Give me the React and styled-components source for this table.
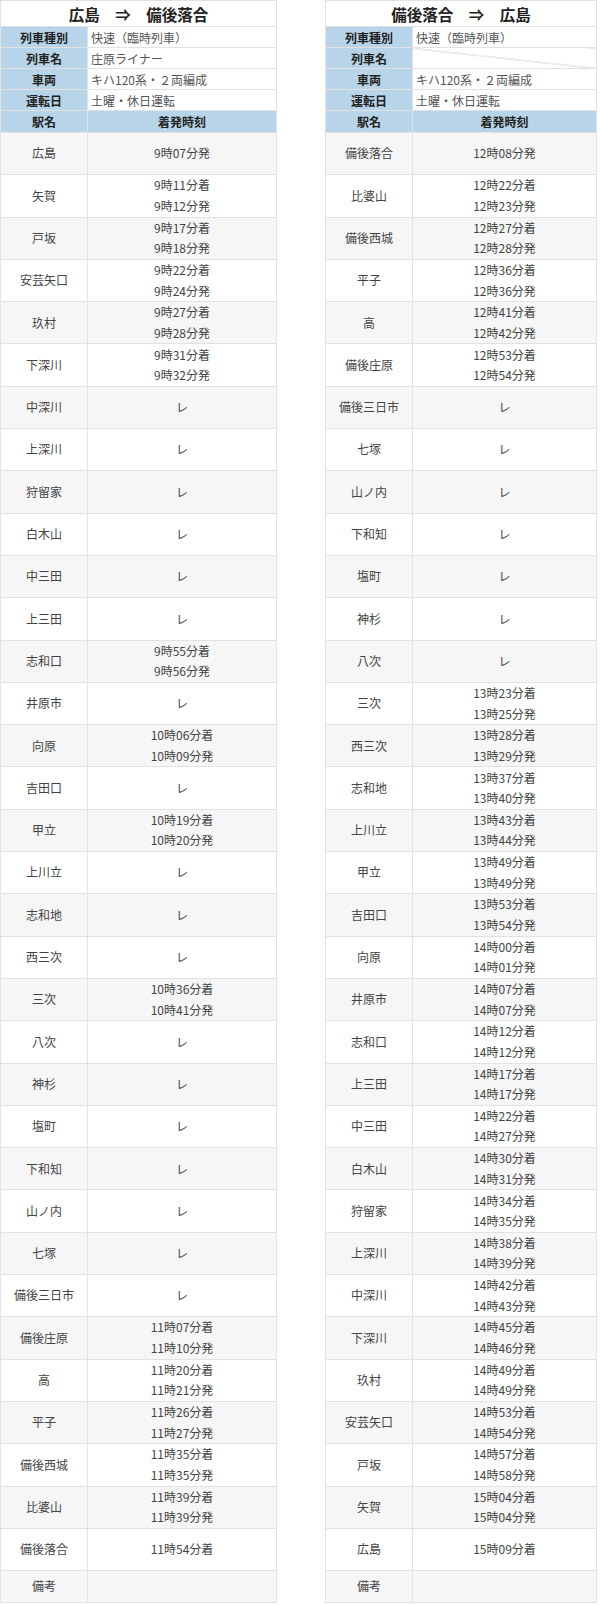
import React from 'react';
import styled, { createGlobalStyle } from 'styled-components';

const GlobalStyle = createGlobalStyle`
  body {
    margin: 0;
    background: #fff;
    font-family: "Noto Sans CJK JP", "Noto Sans", sans-serif;
    color: #444;
  }
`;

const Page = styled.div`
  display: flex;
  align-items: flex-start;
  justify-content: space-between;
  width: 597px;
`;

const Table = styled.table`
  width: ${(p) => p.width}px;
  border-collapse: collapse;
  table-layout: fixed;
  font-size: 12px;
`;

const LabelCol = styled.col`
  width: 87px;
`;

const TitleCell = styled.td`
  height: 25px;
  padding: 0;
  border: 1px solid #e2e2e2;
  text-align: center;
  font-size: 15.5px;
  font-weight: bold;
  color: #222;
  white-space: pre;
`;

const Label = styled.td`
  height: 20px;
  padding: 0;
  border: 1px solid #e2e2e2;
  background: #b7d4e8;
  text-align: center;
  font-weight: bold;
  color: #222;
`;

const Value = styled.td`
  padding: 0 0 0 3px;
  border: 1px solid #e2e2e2;
  color: #555;
  white-space: nowrap;
  background: ${(p) =>
    p.slashed
      ? 'linear-gradient(to top right, #fff calc(50% - 0.8px), #cfcfcf 50%, #fff calc(50% + 0.8px))'
      : '#fff'};
`;

const HeadCell = styled.td`
  height: 21px;
  padding: 0;
  border: 1px solid #e2e2e2;
  background: #b7d4e8;
  text-align: center;
  font-weight: bold;
  color: #222;
`;

const Row = styled.tr`
  height: ${(p) => (p.remarks ? 32 : 42.3)}px;
  background: ${(p) => (p.odd ? '#f6f6f6' : '#fff')};
`;

const Cell = styled.td`
  padding: 0;
  border: 1px solid #e2e2e2;
  text-align: center;
  line-height: 20.5px;
  color: #444;
`;

const leftInfo = {
  title: '広島　⇒　備後落合',
  type: '快速（臨時列車）',
  name: '庄原ライナー',
  car: 'キハ120系・２両編成',
  day: '土曜・休日運転',
};

const rightInfo = {
  title: '備後落合　⇒　広島',
  type: '快速（臨時列車）',
  name: null,
  car: 'キハ120系・２両編成',
  day: '土曜・休日運転',
};

const P = 'レ';

const leftStops = [
  ['広島', ['9時07分発']],
  ['矢賀', ['9時11分着', '9時12分発']],
  ['戸坂', ['9時17分着', '9時18分発']],
  ['安芸矢口', ['9時22分着', '9時24分発']],
  ['玖村', ['9時27分着', '9時28分発']],
  ['下深川', ['9時31分着', '9時32分発']],
  ['中深川', [P]],
  ['上深川', [P]],
  ['狩留家', [P]],
  ['白木山', [P]],
  ['中三田', [P]],
  ['上三田', [P]],
  ['志和口', ['9時55分着', '9時56分発']],
  ['井原市', [P]],
  ['向原', ['10時06分着', '10時09分発']],
  ['吉田口', [P]],
  ['甲立', ['10時19分着', '10時20分発']],
  ['上川立', [P]],
  ['志和地', [P]],
  ['西三次', [P]],
  ['三次', ['10時36分着', '10時41分発']],
  ['八次', [P]],
  ['神杉', [P]],
  ['塩町', [P]],
  ['下和知', [P]],
  ['山ノ内', [P]],
  ['七塚', [P]],
  ['備後三日市', [P]],
  ['備後庄原', ['11時07分着', '11時10分発']],
  ['高', ['11時20分着', '11時21分発']],
  ['平子', ['11時26分着', '11時27分発']],
  ['備後西城', ['11時35分着', '11時35分発']],
  ['比婆山', ['11時39分着', '11時39分発']],
  ['備後落合', ['11時54分着']],
];

const rightStops = [
  ['備後落合', ['12時08分発']],
  ['比婆山', ['12時22分着', '12時23分発']],
  ['備後西城', ['12時27分着', '12時28分発']],
  ['平子', ['12時36分着', '12時36分発']],
  ['高', ['12時41分着', '12時42分発']],
  ['備後庄原', ['12時53分着', '12時54分発']],
  ['備後三日市', [P]],
  ['七塚', [P]],
  ['山ノ内', [P]],
  ['下和知', [P]],
  ['塩町', [P]],
  ['神杉', [P]],
  ['八次', [P]],
  ['三次', ['13時23分着', '13時25分発']],
  ['西三次', ['13時28分着', '13時29分発']],
  ['志和地', ['13時37分着', '13時40分発']],
  ['上川立', ['13時43分着', '13時44分発']],
  ['甲立', ['13時49分着', '13時49分発']],
  ['吉田口', ['13時53分着', '13時54分発']],
  ['向原', ['14時00分着', '14時01分発']],
  ['井原市', ['14時07分着', '14時07分発']],
  ['志和口', ['14時12分着', '14時12分発']],
  ['上三田', ['14時17分着', '14時17分発']],
  ['中三田', ['14時22分着', '14時27分発']],
  ['白木山', ['14時30分着', '14時31分発']],
  ['狩留家', ['14時34分着', '14時35分発']],
  ['上深川', ['14時38分着', '14時39分発']],
  ['中深川', ['14時42分着', '14時43分発']],
  ['下深川', ['14時45分着', '14時46分発']],
  ['玖村', ['14時49分着', '14時49分発']],
  ['安芸矢口', ['14時53分着', '14時54分発']],
  ['戸坂', ['14時57分着', '14時58分発']],
  ['矢賀', ['15時04分着', '15時04分発']],
  ['広島', ['15時09分着']],
];

function Timetable({ info, stops, width }) {
  return (
    <Table width={width}>
      <colgroup>
        <LabelCol />
        <col />
      </colgroup>
      <tbody>
        <tr>
          <TitleCell colSpan={2}>{info.title}</TitleCell>
        </tr>
        <tr>
          <Label>列車種別</Label>
          <Value>{info.type}</Value>
        </tr>
        <tr>
          <Label>列車名</Label>
          <Value slashed={!info.name}>{info.name}</Value>
        </tr>
        <tr>
          <Label>車両</Label>
          <Value>{info.car}</Value>
        </tr>
        <tr>
          <Label>運転日</Label>
          <Value>{info.day}</Value>
        </tr>
        <tr>
          <HeadCell>駅名</HeadCell>
          <HeadCell>着発時刻</HeadCell>
        </tr>
        {stops.map(function (s, ind) {
          return (
            <Row key={ind} odd={ind % 2 === 0}>
              <Cell>{s[0]}</Cell>
              <Cell>
                {s[1].map((t, i) => (
                  <div key={i}>{t}</div>
                ))}
              </Cell>
            </Row>
          );
        })}
        <Row remarks odd>
          <Cell>備考</Cell>
          <Cell></Cell>
        </Row>
      </tbody>
    </Table>
  );
}

function App() {
  return (
    <>
      <GlobalStyle />
      <Page>
        <Timetable info={leftInfo} stops={leftStops} width={277} />
        <Timetable info={rightInfo} stops={rightStops} width={272} />
      </Page>
    </>
  );
}

export default App;
